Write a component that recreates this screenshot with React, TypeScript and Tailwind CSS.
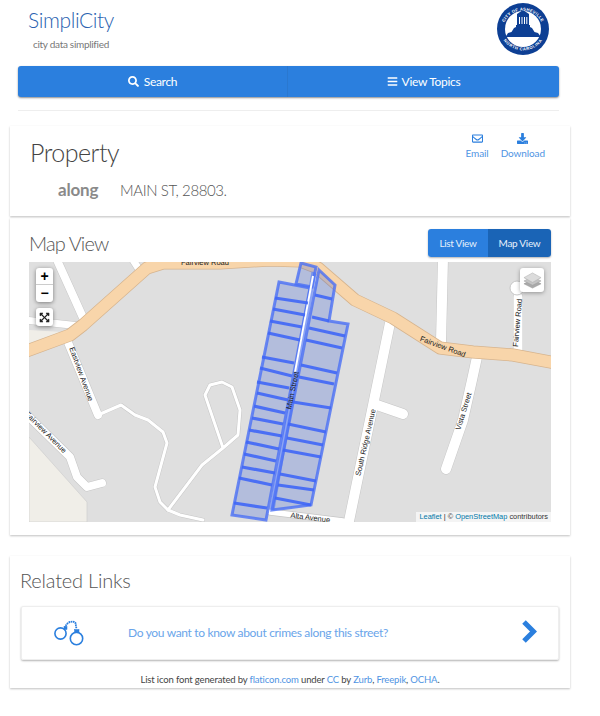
import { FaSearch, FaBars, FaRegEnvelope, FaDownload, FaExpandArrowsAlt } from "react-icons/fa";

const leftBars = [
  [275, 298, 308, 303], [273, 309, 305, 315], [270, 321, 302, 327], [268, 333, 300, 340],
  [262, 357, 294, 363], [260, 368, 292, 376], [257, 382, 289, 388], [257, 393, 288, 400],
  [254, 406, 285, 413], [252, 418, 283, 424], [249, 430, 282, 436], [246, 442, 279, 449],
  [244, 454, 276, 461], [242, 467, 275, 473], [239, 478, 272, 485], [234, 503, 267, 508],
];

const rightBars = [
  [315, 295, 332, 299], [312, 317, 329, 321], [309, 328, 345, 336], [306, 340, 342, 348],
  [301, 365, 337, 373], [299, 377, 334, 384], [293, 402, 331, 408], [288, 424, 326, 432],
  [287, 438, 323, 445], [283, 450, 321, 457], [280, 474, 316, 481], [278, 485, 314, 490],
  [275, 498, 311, 505],
];

function MapDrawing() {
  return (
    <svg viewBox="29 262 522 260" className="block w-[522px] h-[260px]">
      <rect x="29" y="262" width="522" height="260" fill="#dfdfdf" />
      {/* land use */}
      <path d="M29 437 L87 502 L87 522 L29 522 Z" fill="#f0eee8" stroke="#cfcfcf" strokeWidth="0.7" />
      <path d="M29 330 L63 332 L29 345 Z" fill="#f0eee8" />

      {/* minor roads, casing then fill */}
      <g fill="none" stroke="#c6c6c6" strokeLinecap="round" strokeLinejoin="round">
        <path strokeWidth="9" d="M57 260 L85 322 M67 340 L98 415" />
        <path strokeWidth="8" d="M133 260 L142 274 M24 320 L80 326" />
        <path strokeWidth="9" d="M24 412 L70 457 L77 477 L87 487 L102 483" />
        <path strokeWidth="11" d="M390 323 L348 526 M377 405 L403 414" />
        <path strokeWidth="11" d="M443 258 L441 342 M477 357 L472 380 L463 420 L446 469" />
        <path strokeWidth="10" d="M518 350 L518 297" />
        <path strokeWidth="7" d="M270 512 L343 521" />
        <path strokeWidth="4" d="M98 415 L121 405 L135 415 L148 420 L163 432 L167 443 L155 487 L160 502 L168 510 L180 515 L203 520" />
        <path strokeWidth="4" d="M168 510 L202 465 L223 448 L238 435 L240 410 L232 387 L222 382 L210 385 L205 395 L223 448" />
      </g>
      <g fill="none" stroke="#ffffff" strokeLinecap="round" strokeLinejoin="round">
        <path strokeWidth="8" d="M57 260 L85 322 M67 340 L98 415" />
        <path strokeWidth="7" d="M133 260 L142 274 M24 320 L80 326" />
        <path strokeWidth="8" d="M24 412 L70 457 L77 477 L87 487 L102 483" />
        <path strokeWidth="10" d="M390 323 L348 526 M377 405 L403 414" />
        <path strokeWidth="10" d="M443 258 L441 342 M477 357 L472 380 L463 420 L446 469" />
        <path strokeWidth="9" d="M518 350 L518 297" />
        <path strokeWidth="5.5" d="M270 512 L343 521" />
        <path strokeWidth="3" d="M98 415 L121 405 L135 415 L148 420 L163 432 L167 443 L155 487 L160 502 L168 510 L180 515 L203 520" />
        <path strokeWidth="3" d="M168 510 L202 465 L223 448 L238 435 L240 410 L232 387 L222 382 L210 385 L205 395 L223 448" />
      </g>
      <circle cx="517" cy="288" r="7" fill="#fff" stroke="#c6c6c6" />

      {/* Fairview Road */}
      <path d="M24 352 L70 335 L83 325 L147 268 L163 263 L220 263 L270 260 L300 261 L318 268 L355 300 L393 318 L440 348 L473 352 L513 355 L556 363" fill="none" stroke="#d6b48e" strokeWidth="13" strokeLinejoin="round" />
      <path d="M24 352 L70 335 L83 325 L147 268 L163 263 L220 263 L270 260 L300 261 L318 268 L355 300 L393 318 L440 348 L473 352 L513 355 L556 363" fill="none" stroke="#f8d5aa" strokeWidth="11.5" strokeLinejoin="round" />

      <g fontFamily="'Liberation Sans', sans-serif" fontSize="7.5" fill="#222222" textAnchor="middle">
        <text x="205" y="265">Fairview Road</text>
        <text transform="translate(442 349) rotate(20)">Fairview Road</text>
        <text transform="translate(520 323) rotate(-85)">Fairview Road</text>
        <text transform="translate(79 375) rotate(70)">Eastview Avenue</text>
        <text transform="translate(44 434) rotate(45)">Fairview Avenue</text>
        <text transform="translate(368 443) rotate(-77)">South Ridge Avenue</text>
        <text transform="translate(466 412) rotate(-73)">Vista Street</text>
        <text transform="translate(310 520) rotate(7)">Alta Avenue</text>
      </g>

      {/* parcels */}
      <path d="M314 272 L272 510" stroke="#7f9bf7" strokeWidth="5" strokeOpacity="0.85" fill="none" />
      <g fill="#3f63d8" fillOpacity="0.27" stroke="#4a6ff5" strokeOpacity="0.8" strokeLinejoin="miter">
        <path strokeWidth="3" d="M279 282 L310 288 L266 520 L232 515 Z" />
        <path strokeWidth="3" d="M301 263 L316 267 L312 287 L296 284 Z" />
        <path strokeWidth="3" d="M319 270 L335 285 L329 321 L348 324 L311 505 L272 510 Z" />
      </g>
      <path d="M313 276 L295 372" stroke="#ffffff" strokeWidth="2" fill="none" />
      <g stroke="#3f66f6" strokeWidth="3.2" strokeOpacity="0.9">
        {leftBars.concat(rightBars).map(([x1, y1, x2, y2]) => (
          <line key={`${x1}-${y1}`} x1={x1} y1={y1} x2={x2} y2={y2} />
        ))}
      </g>
      <text transform="translate(295 391) rotate(-78)" fontFamily="'Liberation Sans', sans-serif" fontSize="7.5" fill="#222222" textAnchor="middle">Main Street</text>
    </svg>
  );
}

function Seal() {
  return (
    <svg viewBox="0 0 52 52" className="w-[52px] h-[52px]">
      <circle cx="26" cy="26" r="26" fill="#0d3f94" />
      <circle cx="26" cy="26" r="18" fill="#ffffff" />
      <path d="M8.5 34 L44 34 L41 30 L37.5 29 L35 25 L33 24 L33 22 L19 22 L19 24 L17 25 L14.5 29 L11 30 Z" fill="#0d3f94" />
      <path d="M20 11 L26 7 L32 11 L32 13 L20 13 Z" fill="#0d3f94" />
      <rect x="20" y="13" width="12" height="9" fill="#0d3f94" />
      <path d="M22.5 14 V21 M25 14 V21 M27.5 14 V21 M29.8 14 V21" stroke="#ffffff" strokeWidth="1" />
      <defs>
        <path id="sealTop" d="M5.5 28 A20.5 20.5 0 0 1 46.5 28" />
        <path id="sealBottom" d="M2.5 24 A23.5 23.5 0 0 0 49.5 24" />
      </defs>
      <g fontFamily="'Liberation Sans', sans-serif" fontSize="4.2" fontWeight="700" fill="#ffffff" textAnchor="middle">
        <text letterSpacing="0.3"><textPath href="#sealTop" startOffset="50%">CITY OF ASHEVILLE</textPath></text>
        <text letterSpacing="0.5"><textPath href="#sealBottom" startOffset="50%">NORTH CAROLINA</textPath></text>
      </g>
    </svg>
  );
}

function Cuffs() {
  return (
    <svg viewBox="0 0 32 26" className="w-[32px] h-[26px]" fill="none" stroke="#2b7fde">
      <circle cx="7.5" cy="13.5" r="5.6" strokeWidth="1.6" />
      <circle cx="23.5" cy="18.5" r="6.2" strokeWidth="1.6" />
      <path d="M12 8 C13 2 20 0 22.5 3 L23.5 9" strokeWidth="1.8" strokeDasharray="1.6 0.6" />
      <rect x="11" y="6.5" width="3" height="3" fill="#2b7fde" strokeWidth="0.5" />
      <rect x="21.5" y="9.5" width="4.5" height="3.4" fill="#2b7fde" strokeWidth="0.5" />
    </svg>
  );
}

function Layers() {
  return (
    <svg viewBox="0 0 20 20" className="w-[19px] h-[19px]">
      <path d="M10 9 L19 13.5 L10 18 L1 13.5 Z" fill="#a9a9a9" stroke="#8f8f8f" strokeWidth="0.5" />
      <path d="M10 6 L19 10.5 L10 15 L1 10.5 Z" fill="#c4c4c4" stroke="#9a9a9a" strokeWidth="0.5" />
      <path d="M10 2 L19 7 L10 12 L1 7 Z" fill="#dcdcdc" stroke="#a5a5a5" strokeWidth="0.5" />
    </svg>
  );
}

export default function App() {
  return (
    <div className="w-[600px] h-[716px] bg-white overflow-hidden text-[#555555] font-['Lato','Noto_Sans',sans-serif]">
      <div className="h-[66px] flex justify-between pr-[51px]">
        <div className="pl-[28px] pt-[6px]">
          <div className="text-[21px] leading-[28px] font-light tracking-[-0.4px] text-[#2a62b0]">SimpliCity</div>
          <div className="pl-[5px] pt-[3px] text-[10px] leading-[14px] tracking-[-0.3px] text-[#777777]">city data simplified</div>
        </div>
        <div className="pt-[3px]"><Seal /></div>
      </div>

      <div className="mx-[18px] w-[541px] h-[31px] flex bg-[#2b7fde] rounded-[3px] shadow-[0_1px_2px_rgba(0,0,0,0.45)] text-white text-[12px] tracking-[-0.3px]">
        <div className="w-[270px] flex items-center justify-center gap-[5px] border-r border-[#2a78d0]">
          <FaSearch className="w-[11px] h-[11px]" /> Search
        </div>
        <div className="flex-1 flex items-center justify-center gap-[4px]">
          <FaBars className="w-[11px] h-[11px]" /> View Topics
        </div>
      </div>
      <div className="mx-[18px] w-[541px] mt-[13px] border-t border-[#eeeeee]" />

      <section className="mt-[15px] mx-[10px] w-[560px] h-[90px] shadow-[0_1px_2px_rgba(0,0,0,0.25)]">
        <div className="flex justify-between pl-[20px] pr-[25px]">
          <h1 className="pt-[10px] text-[25px] leading-[32px] font-light tracking-[-0.5px] text-[#444444]">Property</h1>
          <div className="flex gap-[12px] pt-[7px] text-[10px] leading-[14px] tracking-[-0.1px] text-[#4f94e3]">
            <div className="flex flex-col items-center gap-[2px] pl-[1px]"><FaRegEnvelope className="w-[11px] h-[11px] text-[#2b7fde]" />Email</div>
            <div className="flex flex-col items-center gap-[2px]"><FaDownload className="w-[11px] h-[11px] text-[#2b7fde]" />Download</div>
          </div>
        </div>
        <div className="flex items-baseline pl-[48px] pt-[12px] leading-[20px]">
          <span className="w-[62px] text-[17px] font-bold tracking-[-0.2px] text-[#8a8a8a]">along</span>
          <span className="text-[15px] font-light tracking-[-0.4px]">MAIN ST, 28803.</span>
        </div>
      </section>

      <section className="mt-[2px] mx-[10px] w-[560px] h-[317px] px-[19px] shadow-[0_1px_2px_rgba(0,0,0,0.25)]">
        <div className="h-[44px] flex justify-between pt-[11px]">
          <h2 className="text-[20px] leading-[28px] font-light tracking-[-0.9px] text-[#555555]">Map View</h2>
          <div className="flex h-[28px] rounded-[3px] shadow-[0_1px_2px_rgba(0,0,0,0.3)] text-[10px] tracking-[-0.3px] text-[#e6f0fb] overflow-hidden">
            <div className="w-[60px] bg-[#2b7fde] flex items-center justify-center">List View</div>
            <div className="w-[63px] bg-[#1a64b6] flex items-center justify-center">Map View</div>
          </div>
        </div>
        <div className="relative">
          <MapDrawing />
          <div className="absolute left-[7px] top-[6px] w-[17px] rounded-[3px] bg-white shadow-[0_1px_4px_rgba(0,0,0,0.45)] font-['Liberation_Sans',sans-serif] font-bold text-[14px] leading-[17px] text-black text-center">
            <div className="h-[17px] border-b border-[#cccccc]">+</div>
            <div className="h-[17px]">−</div>
          </div>
          <div className="absolute left-[7px] top-[46px] w-[17px] h-[18px] rounded-[3px] bg-white shadow-[0_1px_4px_rgba(0,0,0,0.45)] flex items-center justify-center">
            <FaExpandArrowsAlt className="w-[11px] h-[11px] text-[#222222]" />
          </div>
          <div className="absolute right-[7px] top-[6px] w-[24px] h-[24px] rounded-[3px] bg-white shadow-[0_1px_4px_rgba(0,0,0,0.35)] flex items-center justify-center">
            <Layers />
          </div>
          <div className="absolute right-0 bottom-0 h-[10px] pl-[3px] pr-[3px] bg-[#f4f4f4] font-['Liberation_Sans',sans-serif] text-[7.4px] leading-[10px] text-[#333333]">
            <span className="text-[#0078a8]">Leaflet</span> | © <span className="text-[#0078a8]">OpenStreetMap</span> contributors
          </div>
        </div>
      </section>

      <section className="mt-[21px] mx-[10px] w-[560px] h-[132px] shadow-[0_1px_2px_rgba(0,0,0,0.25)]">
        <h2 className="pl-[10px] pt-[10px] text-[20px] leading-[28px] font-light tracking-[-0.2px] text-[#555555]">Related Links</h2>
        <div className="ml-[11px] mt-[12px] w-[538px] h-[54px] flex items-center rounded-[2px] border border-[#eeeeee] shadow-[0_1px_2px_rgba(0,0,0,0.3)]">
          <div className="w-[106px] pl-[31px] shrink-0"><Cuffs /></div>
          <div className="flex-1 text-[12px] tracking-[-0.33px] text-[#6aa5ea]">Do you want to know about crimes along this street?</div>
          <svg viewBox="0 0 16 23" className="w-[16px] h-[23px] mr-[21px] mb-[4px]" fill="none" stroke="#2b7fde" strokeWidth="5">
            <path d="M3 2 L12.5 11.5 L3 21" />
          </svg>
        </div>
        <div className="pt-[14px] text-center text-[9.5px] leading-[12px] tracking-[-0.15px] text-[#444444]">
          List icon font generated by <span className="text-[#4f94e3]">flaticon.com</span> under <span className="text-[#4f94e3]">CC</span> by <span className="text-[#4f94e3]">Zurb</span>, <span className="text-[#4f94e3]">Freepik</span>, <span className="text-[#4f94e3]">OCHA</span>.
        </div>
      </section>
    </div>
  );
}
